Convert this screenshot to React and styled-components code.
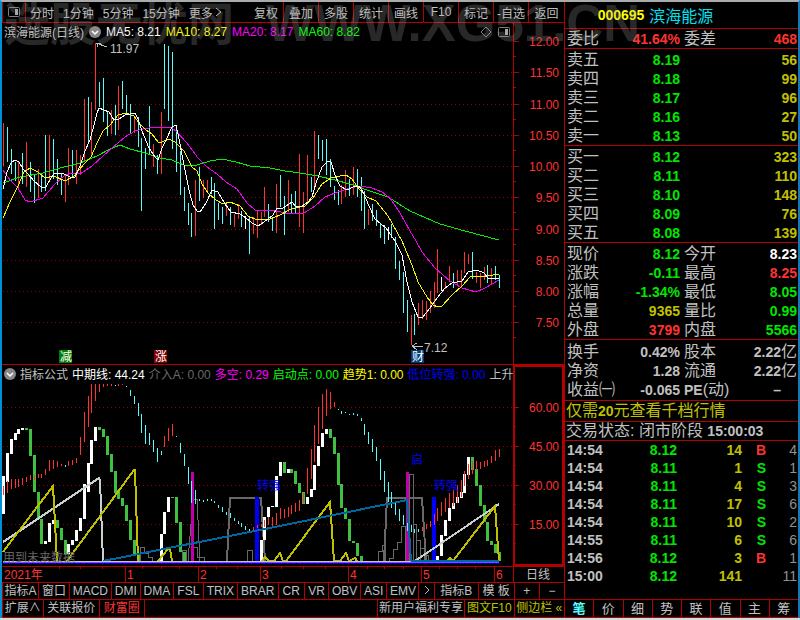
import styled, { createGlobalStyle } from "styled-components";

const RED = "#b40000";
const UP = "#ff3232";
const DOWN = "#54fcfc";
const GREEN = "#00e600";
const GOLD = "#c0c000";
const GREY = "#c0c0c0";

const GlobalStyle = createGlobalStyle`
  * {
    box-sizing: border-box;
  }
  body {
    margin: 0;
    background-color: #d8dcdc;
    font-family: "Liberation Sans", "Noto Sans CJK SC", sans-serif;
    font-size: 12px;
    color: ${GREY};
  }
  button, a {
    font: inherit;
    color: inherit;
    text-decoration: none;
    white-space: nowrap;
  }
  button {
    background: none;
    border: none;
    padding: 0;
    cursor: pointer;
  }
`;

const Frame = styled.main`
  position: relative;
  display: grid;
  grid-template-columns: minmax(0, 1fr) 234px;
  background-color: black;
  border-left: 2px solid #0090d8;
  border-right: 2px solid #1878b4;
  border-top: 2px solid #a8acac;
  overflow: hidden;
`;
const Watermark = styled.div`
  position: absolute;
  top: 0;
  left: 2px;
  display: flex;
  align-items: center;
  gap: 32px;
  height: 44px;
  font-weight: bold;
  font-size: 51px;
  line-height: 44px;
  white-space: nowrap;
  color: rgba(160, 160, 160, 0.25);
  pointer-events: none;
`;
const WatermarkName = styled.span`
  font-size: 46px;
`;
const Left = styled.div`
  display: flex;
  flex-direction: column;
  min-width: 0;
`;

const Bar = styled.nav`
  display: flex;
  height: ${(props) => props.height}px;
  border-left: 1px solid ${RED};
  border-bottom: 1px solid ${RED};
`;
const Periods = styled.div`
  display: flex;
  align-items: center;
  gap: 9px;
  flex: 1;
  padding-left: 4px;
`;
const PanelButton = styled.button`
  display: grid;
  place-items: center;
  width: 23px;
  border-right: 1px solid ${RED};
`;
const MoreButton = styled.button`
  display: flex;
  align-items: center;
  gap: 2px;
`;
const ToolButton = styled.button`
  width: 35px;
  border-right: ${(props) => (props.$last ? "none" : `1px solid ${RED}`)};
`;
const Tab = styled.button`
  flex: ${(props) => props.$size} 1 0;
  min-width: 0;
  line-height: 15px;
  color: ${(props) => props.$color || GREY};
  border-right: ${(props) => (props.$last ? "none" : `1px solid ${RED}`)};
`;
const Spacer = styled.div`
  flex: ${(props) => props.$size} 1 0;
  border-right: 1px solid ${RED};
`;

const ChartBox = styled.section`
  display: grid;
  border-bottom: 1px solid ${RED};
`;
const Drawing = styled.svg`
  grid-area: 1 / 1;
  display: block;
  width: 100%;
  height: auto;
`;
const Legend = styled.header`
  grid-area: 1 / 1;
  align-self: start;
  display: flex;
  align-items: center;
  gap: ${(props) => props.$gap}px;
  height: 17px;
  margin-right: 51px;
  padding: 0 3px 0 2px;
  overflow: hidden;
  white-space: nowrap;
`;
const LegendItem = styled.span`
  flex: none;
  color: ${(props) => props.$color};
`;
const LegendTools = styled.span`
  display: flex;
  gap: 6px;
  margin-left: auto;
`;

const Right = styled.aside`
  display: flex;
  flex-direction: column;
  border-left: 1px solid ${RED};
  font-size: 16px;
`;
const Title = styled.h1`
  display: flex;
  align-items: center;
  justify-content: center;
  gap: 5px;
  height: 27px;
  margin: 0;
  padding-right: 52px;
  border-bottom: 1px solid ${RED};
  font-size: 16px;
  font-weight: normal;
  color: #00e0f0;
`;
const Num = styled.b`
  font-size: 14px;
  line-height: 14px;
  color: ${(props) => props.$color || "inherit"};
`;
const Section = styled.section`
  padding: ${(props) => props.$pad || "1px 0 0"};
  border-bottom: 1px solid ${RED};
`;
const Table = styled.table`
  width: 100%;
  table-layout: fixed;
  border-spacing: 0;
`;
const Label = styled.th`
  width: 50px;
  height: 19px;
  padding: 0 0 0 ${(props) => (props.$second ? 3 : 2)}px;
  font-weight: normal;
  line-height: 18px;
  text-align: left;
  white-space: nowrap;
`;
const Value = styled.td`
  padding: 0 1px 0 0;
  line-height: 18px;
  text-align: right;
  white-space: nowrap;
  color: ${(props) => props.$color};
`;
const ValueFirst = styled(Value)`
  width: 66px;
`;
const Notice = styled.a`
  height: 21px;
  padding-left: 1px;
  line-height: 20px;
  border-bottom: 1px solid ${RED};
  color: ${GOLD};
`;
const Status = styled.p`
  height: 19px;
  margin: 0;
  padding-left: 1px;
  line-height: 18px;
  border-bottom: 1px solid ${RED};
  white-space: nowrap;
`;
const Trades = styled.div`
  flex: 1;
`;
const TradeCell = styled.td`
  height: 18px;
  padding: 0 1px 0 2px;
  font-size: 14px;
  font-weight: ${(props) => (props.$thin ? "normal" : "bold")};
  line-height: 18px;
  text-align: ${(props) => props.$align || "right"};
  color: ${(props) => props.$color || GREY};
`;
const SideTabs = styled.nav`
  display: flex;
  height: 19px;
  font-size: 13px;
  border-top: 1px solid ${RED};
  border-bottom: 1px solid ${RED};
`;
const SideTab = styled(Tab)`
  line-height: 17px;
  font-weight: ${(props) => (props.$color ? "bold" : "normal")};
`;

// every bar is one trading day: [top, bottom, kind], kind r = up, c = down, w = flat
const candles = `123 166 r,127 162 c,149 174 c,162 181 c,161 190 r,153 184 c,142 187 r,162 192 c,175 203 c,169 198 r,176 192 c,135 191 c,135 180 r,139 179 c,159 185 c,174 195 c,174 202 r,148 185 r,150 176 c,150 184 r,155 175 r,99 161 r,97 144 c,102 155 r,43 110 r,82 107 c,78 122 c,112 136 c,110 134 r,105 135 c,86 130 r,81 109 c,95 115 c,104 133 c,118 133 r,117 147 c,138 211 c,148 169 c,106 155 c,144 167 r,155 174 c,112 174 r,44 109 c,46 121 c,52 149 c,128 172 c,151 195 c,187 211 c,203 225 c,213 237 c,180 236 r,167 201 c,180 198 r,180 191 r,177 194 c,183 229 c,203 220 c,207 224 c,203 216 r,207 225 c,214 227 r,204 219 r,211 227 c,216 229 w,217 254 c,217 234 r,211 238 r,212 225 r,187 217 r,204 222 c,217 231 c,184 233 r,175 207 c,196 235 c,180 212 r,194 213 c,191 213 c,154 227 r,192 233 r,155 203 r,177 192 c,131 189 r,135 159 c,140 161 c,139 175 c,159 187 c,186 200 c,190 205 c,185 204 r,170 197 r,179 196 c,167 195 r,169 197 c,177 211 c,191 229 c,209 225 r,204 221 c,210 226 c,223 238 c,225 244 c,227 240 w,224 238 c,237 269 c,261 280 c,272 313 c,300 332 c,315 345 r,314 335 c,303 325 r,300 319 r,301 320 r,291 313 r,282 308 r,249 293 r,277 291 w,282 289 r,266 282 r,273 288 c,270 285 r,270 286 r,252 273 r,254 264 r,252 279 c,272 283 r,273 288 r,267 280 r,265 283 c,268 284 r,266 280 c,275 288 c`;

const trend = `486 495 r,481 493 r,479 489 r,479 488 r,479 487 r,478 485 r,477 482 r,475 480 r,475 480 r,474 478 r,474 478 r,469 475 r,460 471 r,460 469 r,461 467 r,464 466 r,465 467 c,461 466 r,460 465 r,458 463 r,437 455 r,412 442 r,396 427 r,384 413 r,384 401 r,384 392 r,384 387 r,384 386 r,384 386 r,385 386 c,384 386 r,384 385 r,386 387 c,390 396 c,396 404 c,403 416 c,414 433 c,425 444 c,433 445 c,440 452 c,448 462 c,451 455 c,436 447 r,428 441 r,424 436 r,436 437 c,443 453 c,454 466 c,467 484 c,481 503 c,490 504 c,499 501 c,500 502 c,499 501 c,499 501 c,501 503 c,505 508 c,507 512 c,512 515 c,513 518 c,518 521 c,521 524 c,523 527 c,526 530 c,529 531 c,527 530 r,525 528 r,524 527 r,520 527 r,517 525 r,517 526 r,513 525 r,508 519 r,509 518 r,507 517 r,505 514 r,503 512 r,500 511 r,493 503 r,468 494 r,449 479 r,425 462 r,407 444 r,394 429 r,389 416 r,392 409 r,402 407 r,409 410 c,411 414 c,412 413 c,414 415 c,413 415 c,414 416 c,418 421 c,424 435 c,432 444 c,439 452 c,447 461 c,459 480 c,471 492 c,482 502 c,492 508 c,503 515 c,509 521 c,515 525 c,521 531 c,525 532 c,529 533 c,529 532 c,527 531 r,524 529 r,521 527 r,514 525 r,508 521 r,502 516 r,498 512 r,493 508 r,490 506 r,485 503 r,480 497 r,471 486 r,464 479 r,461 474 r,461 470 r,462 469 r,461 467 r,460 466 r,456 463 r,450 461 r,449 457 r`;

// [first day, "top bottom kind, ..."], kind w = rising, g = falling
const waves = [
  [0, "476 514 w,453 482 w,439 454 w,433 440 w,429 434 w,428 430 w,428 430 g,429 456 g,455 492 g,492 519 g,519 544 g,541 544 w,523 542 w,520 524 w,520 528 g,528 540 g,540 554 g,544 554 w,540 545 w,530 541 w,518 531 w,484 519 w,463 492 w,440 464 w,427 441 w,427 430 g,429 437 g,436 455 g,454 472 g,471 493 g,490 499 g,498 506 g,505 521 g,520 540 g,540 554 g,554 561 g"],
  [41, "534 561 w,512 534 w,497 512 w,497 498 g,497 523 g,522 552 g,552 561 g"],
  [67, "540 561 w,517 540 w,507 517 w,506 507 w,476 507 w,462 476 w,462 473 g,469 473 w,469 473 g,471 484 g,483 493 g,492 504 g,497 504 w,489 497 w,465 490 w,446 466 w,433 447 w,429 434 w,429 438 g,437 454 g,453 485 g,484 508 g,508 519 g,519 541 g,541 543 g,543 556 g,556 561 g"],
  [113, "556 561 w,535 556 w,520 536 w,508 521 w,503 509 w,497 503 w,492 498 w,474 493 w,457 475 w,457 470 g,469 486 g,485 506 g,505 522 g,522 541 g,541 545 g,544 553 g,552 561 g"],
];

const averages = [
  ["#00f000", "3,183 20,177 43,173 60,168 80,163 97,156 110,149 120,145 130,149 145,153 160,158 172,160 184,165 197,165 210,161 222,159 236,162 250,166 270,168 285,171 300,173 318,176 335,180 350,184 370,191 388,197 410,211 440,224 465,231 499,240"],
  ["#f000f0", "3,170 10,180 18,188 25,200 30,202 43,198 54,185 65,175 72,173 80,174 92,166 103,156 112,148 125,137 135,131 143,129 155,127 170,127 176,131 187,143 198,158 207,167 217,174 226,182 237,189 247,203 255,210 262,211 272,210 290,214 304,213 315,206 325,197 335,193 350,188 360,186 372,188 382,192 390,198 400,213 410,231 416,241 422,252 435,268 450,281 462,288 476,292 485,288 499,280"],
  ["#f8f800", "3,218 10,202 18,186 24,172 30,168 38,172 45,178 54,176 65,181 74,176 84,164 91,157 97,143 103,131 110,125 118,115 126,113 134,116 140,124 146,130 152,134 158,142 162,142 169,139 175,142 184,151 192,167 197,171 202,184 208,193 216,200 223,204 230,202 240,206 248,216 257,220 270,219 280,215 291,209 305,206 313,198 322,184 331,178 340,176 346,175 352,179 359,189 367,197 376,201 388,216 397,232 402,241 412,265 418,282 427,297 433,305 438,307 442,306 452,295 462,286 470,277 487,276 499,274"],
  ["#ffffff", "3,189 7,172 11,163 15,160 19,162 23,169 28,174 34,181 41,187 46,187 51,178 54,174 62,173 70,177 75,177 80,166 85,151 90,140 94,125 97,113 99,108 104,110 109,112 114,120 119,119 125,115 130,114 135,113 138,119 142,131 149,148 155,157 158,160 162,148 167,138 172,127 176,125 179,139 184,165 189,190 193,205 197,211 200,212 206,203 212,190 218,192 225,204 231,212 240,214 246,218 252,223 258,226 264,222 273,215 277,208 283,208 292,202 296,207 302,206 308,202 312,197 316,183 322,167 328,161 331,162 335,175 340,186 347,190 353,187 359,186 363,192 369,206 375,219 381,224 386,228 395,241 402,255 407,282 412,302 418,317 422,318 430,308 437,298 445,288 452,283 462,281 468,272 477,270 484,273 488,278 499,278"],
];

const prices = [
  ["12.00", 41],
  ["11.50", 72],
  ["11.00", 104],
  ["10.50", 135],
  ["10.00", 166],
  ["9.50", 197],
  ["9.00", 229],
  ["8.50", 260],
  ["8.00", 291],
  ["7.50", 322],
];
const levels = [
  ["60.00", 407],
  ["45.00", 446],
  ["30.00", 485],
  ["15.00", 524],
];
const events = [
  ["减", 59, "#008000"],
  ["涨", 154, "#800000"],
  ["财", 411, "#003c78"],
];
const months = [
  ["1", 125],
  ["2", 198],
  ["3", 260],
  ["4", 348],
  ["5", 421],
  ["6", 494],
];
const dayTicks = [60, 81, 103, 143, 162, 180, 217, 238, 282, 304, 326, 368, 385, 404, 440, 458, 476];

const colors = { r: UP, c: DOWN, w: "#ffffff", g: "#40c040" };
const dayX = (day) => Math.round(3 + day * 3.845);

function Bars({ data, start = 0, width = 1 }) {
  return data.split(",").map((bar, i) => {
    const [top, bottom, kind] = bar.split(" ");
    return (
      <rect
        key={i}
        x={dayX(start + i) - (width - 1) / 2}
        y={top}
        width={width}
        height={bottom - top}
        fill={colors[kind]}
      />
    );
  });
}

function Scale({ marks, step }) {
  return marks.map(([label, y], i) => (
    <g key={label}>
      {(step === 39 || i > 0) && (
        <path d={`M3 ${y + 0.5}H513`} stroke="#a00000" strokeDasharray="1 3" />
      )}
      <path d={`M514 ${y + 0.5}h5M514 ${y + Math.floor(step / 2) + 0.5}h2`} stroke={RED} />
      <text x="559" y={y + 5} fontSize="12" textAnchor="end" fill={UP}>
        {label}
      </text>
    </g>
  ));
}

function PanelIcon() {
  return (
    <svg width="12" height="12" viewBox="0 0 12 12">
      <rect x="0.5" y="1.5" width="11" height="9" rx="1" fill="none" stroke="#808080" />
      <path d="M7 3h3v6H7z" fill="#a8a8a8" />
    </svg>
  );
}

const ChevronIcon = styled.svg`
  flex: none;
`;

function Chevron() {
  return (
    <ChevronIcon width="12" height="12" viewBox="0 0 12 12">
      <circle cx="6" cy="6" r="6" fill="#888" />
      <path d="M3 5l3 3 3-3" fill="none" stroke="#fff" strokeWidth="1.5" />
    </ChevronIcon>
  );
}

function PriceChart() {
  return (
    <ChartBox>
      <Drawing viewBox="2 23 562 341" shapeRendering="crispEdges">
        <Scale marks={prices} step={31} />
        <path d="M513.5 23V364" stroke={RED} />
        <Bars data={candles} />
        {averages.map(([color, points]) => (
          <polyline key={color} points={points} fill="none" stroke={color} />
        ))}
        <g stroke={GREY} fill="none">
          <path d="M96 43L107 47M96 43h5M97 43v4" />
          <path d="M412 346.5h11M412 346l5-3M412 346l5 4" />
        </g>
        <g fontSize="12" fill={GREY}>
          <text x="110" y="53">11.97</text>
          <text x="424" y="352">7.12</text>
        </g>
        {events.map(([label, x, color]) => (
          <g key={label}>
            <rect x={x} y="350" width="13" height="13" fill={color} />
            <text x={x + 1} y="361" fontSize="12" fill="#fff">
              {label}
            </text>
          </g>
        ))}
      </Drawing>
      <Legend $gap={5}>
        <LegendItem $color={GREY}>滨海能源(日线)</LegendItem>
        <Chevron />
        <LegendItem $color="#fff">MA5: 8.21</LegendItem>
        <LegendItem $color="#ff0">MA10: 8.27</LegendItem>
        <LegendItem $color="#f0f">MA20: 8.17</LegendItem>
        <LegendItem $color="#0f0">MA60: 8.82</LegendItem>
        <LegendTools>
          <svg width="12" height="12" viewBox="0 0 12 12">
            <path d="M6 1l5 5-5 5-5-5z" fill="none" stroke="#808080" />
          </svg>
          <PanelIcon />
        </LegendTools>
      </Legend>
    </ChartBox>
  );
}

function IndicatorChart() {
  return (
    <ChartBox>
      <Drawing viewBox="2 365 562 201" shapeRendering="crispEdges">
        <Scale marks={levels} step={39} />
        <rect x="514" y="366" width="49" height="199" fill="none" stroke={RED} strokeWidth="2" />
        <g fill="none" stroke="#686868">
          <path d="M140.5 561V547.5h4v6h4v4h4v3M182.5 561V550.5h4V561M188 561L193 499h4L200 561M193.5 561V547h4v10h7v4M247.5 561V550.5h5V561" />
          <path d="M378.5 561V551.5h4V545.5h3V561M389.5 561V558.5h4V549.5h4V542.5h4V526.5h4V561M409.5 561V474.5h4V561M413.5 524.5h3V561M416.5 540.5h4V561M420.5 548.5h4V561M424.5 555.5h4V561" />
          <path d="M227 561L230 498H261L265 561M384 561L387 498H422L426 561" strokeWidth="2" />
        </g>
        {waves.map(([start, data]) => (
          <Bars key={start} start={start} data={data} width={3} />
        ))}
        <path d="M191 472h3v89h-3zM406 472h3v89h-3z" fill="#c000a8" />
        <path d="M255 497h4v64h-4zM432 497h4v64h-4z" fill="#0000f8" />
        <Bars data={trend} />
        <g fill="none" strokeWidth="2">
          <path d="M3 542L99 478L100 480L103 561M415 561L499 504" stroke="#c8d0d0" />
          <path
            d="M3 552L53 486L57 561M67 561L134 470H135L138 561M158 561L168 549H170L172 561M262 561L265 557L269 561H274L280 553L283 561H286L330 502L334 561H340L346 553L349 561L355 558L357 561M447 561L450 558L453 561L495 506L499 561"
            stroke={GOLD}
          />
          <path d="M103 561L270 528L407 500L411 561H499" stroke="#0068a0" />
        </g>
        <path d="M3 561.5H411" stroke="#c8c8c8" />
        <path d="M3 562.5H499" stroke="#9040ff" />
        <path d="M3 563.5H499" stroke="#0000f8" strokeDasharray="5 1" />
        <g fontSize="12" fill="#0000f8">
          <text x="257" y="490">转强</text>
          <text x="411" y="464">启</text>
          <text x="434" y="490">转强</text>
        </g>
        <text x="3" y="562" fontSize="12" fill="#686868">用到未来数据</text>
      </Drawing>
      <Legend $gap={4}>
        <Chevron />
        <LegendItem $color={GREY}>指标公式</LegendItem>
        <LegendItem $color="#fff">中期线: 44.24</LegendItem>
        <LegendItem $color="#686868">介入A: 0.00</LegendItem>
        <LegendItem $color="#f0f">多空: 0.29</LegendItem>
        <LegendItem $color="#0f0">启动点: 0.00</LegendItem>
        <LegendItem $color="#ff0">趋势1: 0.00</LegendItem>
        <LegendItem $color="#0000f8">低位转强: 0.00</LegendItem>
        <LegendItem $color={GREY}>上升</LegendItem>
      </Legend>
    </ChartBox>
  );
}

function DateAxis() {
  return (
    <ChartBox>
      <Drawing viewBox="2 567 562 15" shapeRendering="crispEdges">
        {dayTicks.map((x) => (
          <path key={x} d={`M${x - 0.5} 567v2`} stroke={RED} />
        ))}
        <path d="M513.5 567v15" stroke={RED} />
        <g fontSize="12" fill={UP}>
          <text x="4" y="579">2021年</text>
          {months.map(([label, x]) => (
            <g key={label}>
              <path d={`M${x + 0.5} 567v15`} stroke={RED} />
              <text x={x + 2} y="579">{label}</text>
            </g>
          ))}
        </g>
        <text x="526" y="579" fontSize="12" fill={GREY}>日线</text>
      </Drawing>
    </ChartBox>
  );
}

const tools = ["复权", "叠加", "多股", "统计", "画线", "F10", "标记", "-自选", "返回"];
const indicators = [
  ["指标A", 36],
  ["窗口", 31],
  ["MACD", 42],
  ["DMI", 29],
  ["DMA", 33],
  ["FSL", 30],
  ["TRIX", 34],
  ["BRAR", 41],
  ["CR", 26],
  ["VR", 24],
  ["OBV", 32],
  ["ASI", 26],
  ["EMV", 32],
  ["﹥", 15],
  ["指标B", 44],
  ["模 板", 36],
  ["+", 25],
  ["−", 25],
];

const sells = [["卖五", "8.19", "56"], ["卖四", "8.18", "99"], ["卖三", "8.17", "96"], ["卖二", "8.16", "27"], ["卖一", "8.13", "50"]];
const buys = [["买一", "8.12", "323"], ["买二", "8.11", "110"], ["买三", "8.10", "148"], ["买四", "8.09", "76"], ["买五", "8.08", "139"]];
const ratio = [["委比", "41.64%", UP, "委差", "468", UP]];
const quote = [
  ["现价", "8.12", GREEN, "今开", "8.23", "#fff"],
  ["涨跌", "-0.11", GREEN, "最高", "8.25", UP],
  ["涨幅", "-1.34%", GREEN, "最低", "8.05", GREEN],
  ["总量", "9365", GOLD, "量比", "0.99", GREEN],
  ["外盘", "3799", UP, "内盘", "5566", GREEN],
];
const capital = [
  ["换手", "0.42%", GREY, "股本", "2.22", GREY, "亿"],
  ["净资", "1.28", GREY, "流通", "2.22", GREY, "亿"],
  ["收益㈠", "-0.065", GREY, "PE(动)", "–", GREY, "\u2003"],
];
const trades = [
  ["14:54", "8.12", "14", "B", "4"],
  ["14:54", "8.11", "1", "S", "1"],
  ["14:54", "8.11", "4", "S", "3"],
  ["14:54", "8.11", "17", "S", "6"],
  ["14:54", "8.11", "10", "S", "2"],
  ["14:55", "8.11", "6", "S", "6"],
  ["14:56", "8.12", "3", "B", "1"],
  ["15:00", "8.12", "141", "", "11"],
];

function Book({ rows }) {
  return (
    <Section>
      <Table>
        <tbody>
          {rows.map(([label, price, volume]) => (
            <tr key={label}>
              <Label scope="row">{label}</Label>
              <ValueFirst $color={GREEN}><Num>{price}</Num></ValueFirst>
              <Value $color={GOLD}><Num>{volume}</Num></Value>
            </tr>
          ))}
        </tbody>
      </Table>
    </Section>
  );
}

function Quotes({ rows, pad }) {
  return (
    <Section $pad={pad}>
      <Table>
        <tbody>
          {rows.map(([label, value, color, label2, value2, color2, unit]) => (
            <tr key={label}>
              <Label scope="row">{label}</Label>
              <ValueFirst $color={color}><Num>{value}</Num></ValueFirst>
              <Label scope="row" $second>
                {label2.startsWith("PE") ? <><Num>PE</Num>{label2.slice(2)}</> : label2}
              </Label>
              <Value $color={color2}><Num>{value2}</Num>{unit}</Value>
            </tr>
          ))}
        </tbody>
      </Table>
    </Section>
  );
}

function App() {
  return (
    <Frame>
      <GlobalStyle />
      <Left>
        <Bar height={21}>
          <PanelButton aria-label="侧栏"><PanelIcon /></PanelButton>
          <Periods>
            <button>分时</button>
            <button>1分钟</button>
            <button>5分钟</button>
            <button>15分钟</button>
            <MoreButton>
              更多
              <svg width="8" height="10" viewBox="0 0 8 10">
                <path d="M1 1l5 4-5 4" fill="none" stroke={GREY} />
              </svg>
            </MoreButton>
          </Periods>
          {tools.map((tool, i) => (
            <ToolButton key={tool} $last={i === tools.length - 1}>{tool}</ToolButton>
          ))}
        </Bar>
        <PriceChart />
        <IndicatorChart />
        <DateAxis />
        <Bar height={17}>
          {indicators.map(([label, size], i) => (
            <Tab key={label} $size={size} $last={i === indicators.length - 1}>
              {label === "﹥" ? (
                <svg width="6" height="10" viewBox="0 0 6 10" aria-label="下一页">
                  <path d="M1 1l4 4-4 4" fill="none" stroke={GREY} />
                </svg>
              ) : (
                label
              )}
            </Tab>
          ))}
        </Bar>
        <Bar height={18}>
          <Tab $size={40}>扩展∧</Tab>
          <Tab $size={56}>关联报价</Tab>
          <Tab $size={44} $color={UP}>财富圈</Tab>
          <Spacer $size={235} />
          <Tab $size={87}>新用户福利专享</Tab>
          <Tab $size={49} $color={GOLD}>图文F10</Tab>
          <Tab $size={50} $color={GOLD} $last>侧边栏 «</Tab>
        </Bar>
      </Left>
      <Right>
        <Title>
          <Num $color="#ff0">000695</Num>
          滨海能源
        </Title>
        <Quotes rows={ratio} pad="0" />
        <Book rows={sells} />
        <Book rows={buys} />
        <Quotes rows={quote} />
        <Quotes rows={capital} pad="2px 0 1px" />
        <Notice href="#level2">仅需<Num>20</Num>元查看千档行情</Notice>
        <Status>交易状态: 闭市阶段 <Num>15:00:03</Num></Status>
        <Trades>
          <Table>
            <colgroup>
              <col width="50" />
              <col width="63" />
              <col width="65" />
              <col width="24" />
              <col />
            </colgroup>
            <tbody>
              {trades.map(([time, price, volume, side, count], i) => (
                <tr key={i}>
                  <TradeCell $align="left">{time}</TradeCell>
                  <TradeCell $color={GREEN}>{price}</TradeCell>
                  <TradeCell $color={GOLD}>{volume}</TradeCell>
                  <TradeCell $color={side === "B" ? UP : GREEN}>{side}</TradeCell>
                  <TradeCell $thin $color="#909090">{count}</TradeCell>
                </tr>
              ))}
            </tbody>
          </Table>
        </Trades>
        <SideTabs>
          {["笔", "价", "细", "势", "联", "值", "主", "筹"].map((tab, i) => (
            <SideTab key={tab} $size={1} $color={i === 0 ? DOWN : undefined} $last={i === 7}>{tab}</SideTab>
          ))}
        </SideTabs>
      </Right>
      <Watermark aria-hidden="true">
        <WatermarkName>选股无忧网</WatermarkName>
        WWW.XG51.CN
      </Watermark>
    </Frame>
  );
}

export default App;
